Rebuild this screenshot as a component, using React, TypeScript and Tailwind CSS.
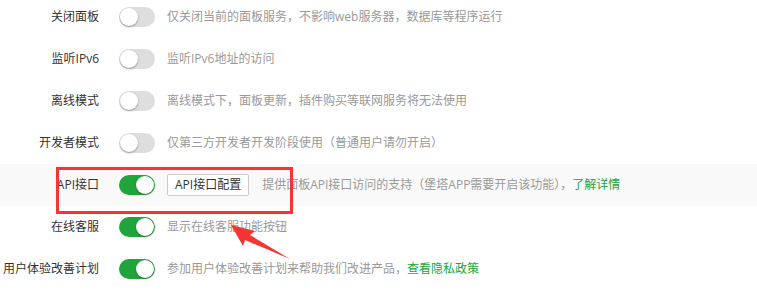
import React from "react";

type Row = {
  label: string;
  on: boolean;
  desc: string;
  link?: string;
  button?: string;
  highlight?: boolean;
};

const rows: Row[] = [
  { label: "关闭面板", on: false, desc: "仅关闭当前的面板服务，不影响web服务器，数据库等程序运行" },
  { label: "监听IPv6", on: false, desc: "监听IPv6地址的访问" },
  { label: "离线模式", on: false, desc: "离线模式下，面板更新，插件购买等联网服务将无法使用" },
  { label: "开发者模式", on: false, desc: "仅第三方开发者开发阶段使用（普通用户请勿开启）" },
  {
    label: "API接口",
    on: true,
    button: "API接口配置",
    desc: "提供面板API接口访问的支持（堡塔APP需要开启该功能），",
    link: "了解详情",
    highlight: true,
  },
  { label: "在线客服", on: true, desc: "显示在线客服功能按钮" },
  { label: "用户体验改善计划", on: true, desc: "参加用户体验改善计划来帮助我们改进产品，", link: "查看隐私政策" },
];

function Toggle({ on }: { on: boolean }) {
  return (
    <div
      className={`relative w-[36px] h-[20px] rounded-full shrink-0 ${on ? "bg-[#20a53a]" : "bg-[#dedede]"}`}
    >
      <div
        className={`absolute top-[1px] w-[18px] h-[18px] rounded-full bg-white shadow-[0_1px_2px_rgba(0,0,0,0.35)] ${on ? "left-[17px]" : "left-[1px]"}`}
      />
    </div>
  );
}

export default function App() {
  return (
    <div
      className="relative w-[757px] h-[295px] bg-white overflow-hidden text-[12px]"
      style={{ fontFamily: '"Open Sans", "Noto Sans CJK SC", sans-serif' }}
    >
      <div className="flex flex-col mt-[-4px]">
        {rows.map((r) => (
          <div
            key={r.label}
            className={`flex items-center h-[42px] ${r.highlight ? "bg-[#f9f9f9]" : ""}`}
          >
            <div className="w-[100px] text-right text-[#333] pr-[1px]">{r.label}</div>
            <div className="ml-[19px]">
              <Toggle on={r.on} />
            </div>
            {r.button && (
              <button className="ml-[12px] h-[22px] px-[7px] border border-[#cccccc] rounded-[2px] bg-white text-[#333] text-[12px] leading-none">
                {r.button}
              </button>
            )}
            <div className={`${r.button ? "ml-[13px]" : "ml-[12px]"} text-[#999]`}>
              {r.desc}
              {r.link && <span className="text-[#20a53a]">{r.link}</span>}
            </div>
          </div>
        ))}
      </div>

      <div className="absolute left-[56px] top-[167px] w-[237px] h-[47px] border-[3px] border-[#f53434]" />

      <svg className="absolute left-0 top-0" width="757" height="295" viewBox="0 0 757 295">
        <polygon
          points="231,225 255,231 250,235 290,259 245,240 243,246"
          fill="#f53434"
        />
      </svg>
    </div>
  );
}
